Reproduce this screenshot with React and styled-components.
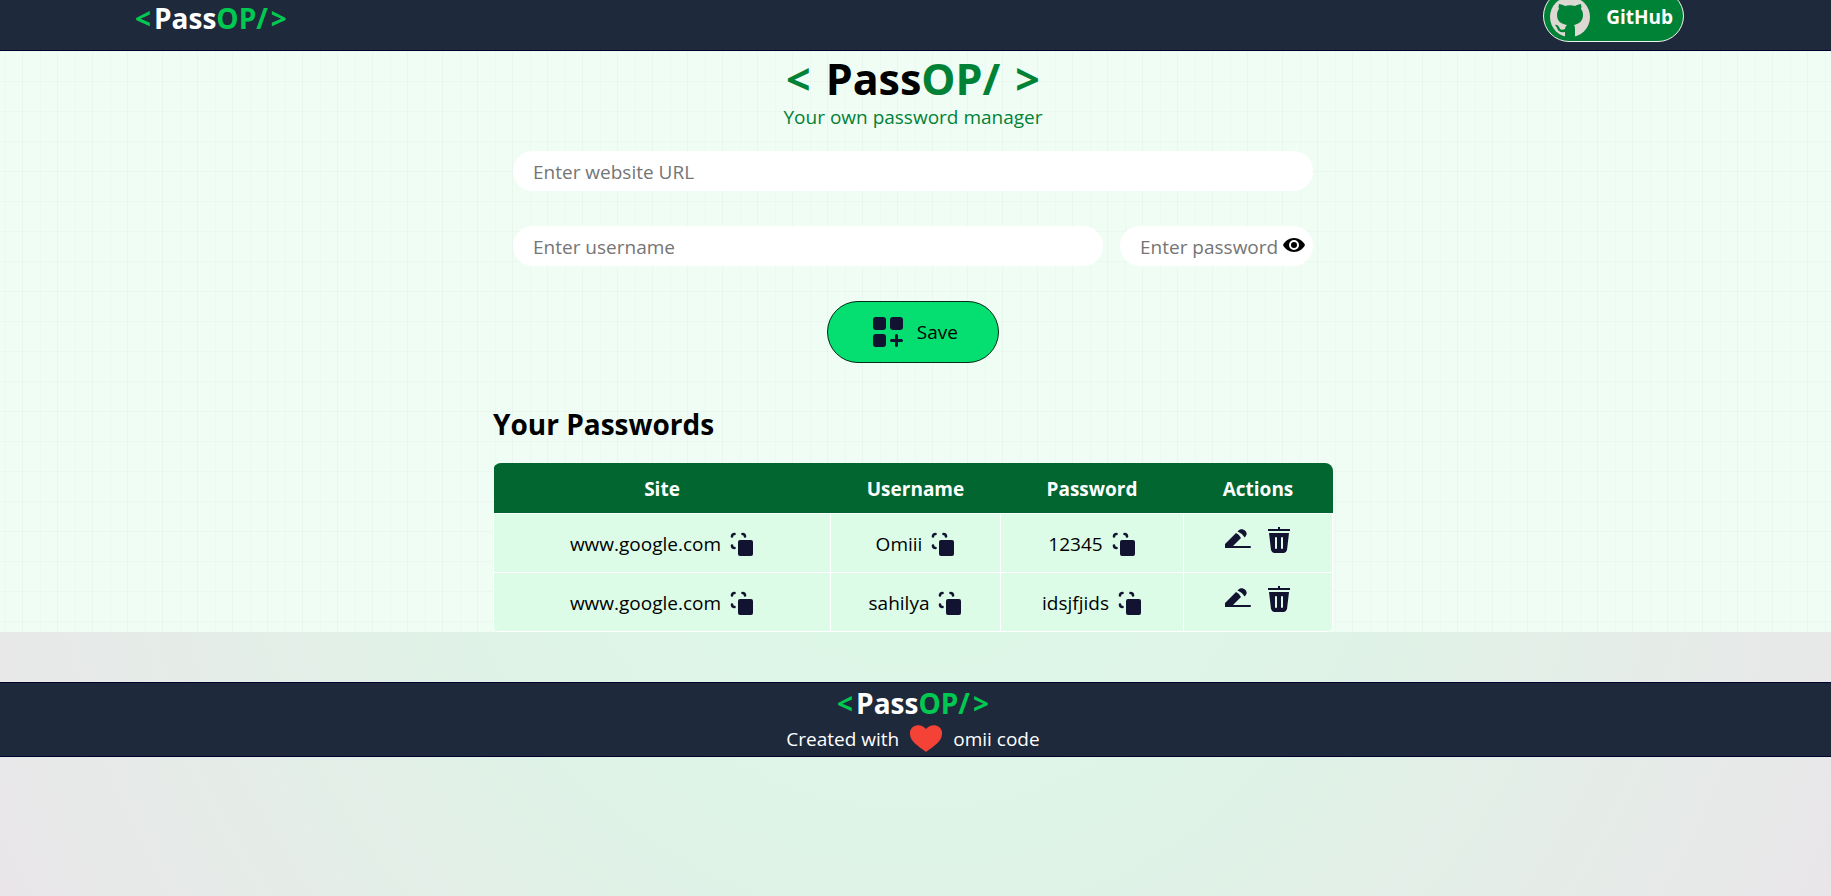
import React from "react";
import styled, { createGlobalStyle } from "styled-components";

const GlobalStyle = createGlobalStyle`
  *, *::before, *::after { box-sizing: border-box; }
  html { background: #e9e6ea; }
  body {
    margin: 0;
    font-family: "Segoe UI", "Open Sans", "Noto Sans", sans-serif;
    font-size: 19px;
    line-height: 30px;
    color: #000;
  }
  h1, h2, p { margin: 0; }
  input, button { font: inherit; }
`;

const Page = styled.div`
  min-height: 100vh;
  background: radial-gradient(circle at 50% 50%, #dcfae4 0%, #ddf6e7 25%, #e0f2e7 50%, #e5ece8 75%, #e8e8e9 92%, #e9e5e9 100%);
`;

const Header = styled.header`
  height: 51px;
  padding: 0 135px;
  display: flex;
  justify-content: space-between;
  background: #1e293b;
  border-bottom: 1px solid #00002e;
  overflow: hidden;
`;

const Brand = styled.div`
  display: flex;
  gap: 3px;
  font-size: 28px;
  font-weight: 700;
  line-height: 36px;
  color: #fff;
`;

const Green = styled.span`
  color: ${(p) => (p.$dark ? "#008236" : "#00c951")};
`;

const GithubButton = styled.button`
  align-self: flex-end;
  flex: none;
  width: 141px;
  height: 52px;
  margin: 0 12px 8px 0;
  padding: 2px 10px 0 6px;
  display: flex;
  align-items: center;
  justify-content: space-between;
  border: 1px solid #f1f1f1;
  border-radius: 26px;
  background: #008236;
  color: #fff;
  font-weight: 700;
`;

const Main = styled.main`
  min-height: 581px;
  padding-right: 5px;
  background-color: #f0fdf4;
  background-image:
    linear-gradient(to right, #8080800f 1px, transparent 1px),
    linear-gradient(to right, #80808008 1px, transparent 1px),
    linear-gradient(to bottom, #8080800c 1px, transparent 1px);
  background-size: 35px 30px;
  background-position: 22px 0, 5px 0, 0 0;
`;

const Container = styled.div`
  max-width: 840px;
  margin: 0 auto;
`;

const Title = styled.h1`
  padding-top: 3px;
  display: flex;
  justify-content: center;
  gap: 15px;
  font-size: 43px;
  line-height: 50px;
`;

const Tagline = styled.p`
  padding-top: 1px;
  line-height: 24px;
  color: #008236;
  text-align: center;
`;

const Form = styled.form`
  padding: 22px 20px 0;
  display: flex;
  flex-direction: column;
  align-items: center;
  gap: 35px;
`;

const FieldRow = styled.div`
  width: 100%;
  display: flex;
  gap: 17px;
`;

const Input = styled.input`
  width: 100%;
  min-width: 0;
  height: 40px;
  padding: 6px 20px 4px;
  border: 0;
  border-radius: 20px;
  background: #fff;
  &::placeholder { color: #757575; opacity: 1; }
`;

const PasswordField = styled.div`
  position: relative;
  flex: none;
  width: 193px;
`;

const EyeButton = styled.button`
  position: absolute;
  top: 8px;
  right: 8px;
  padding: 0;
  border: 0;
  background: none;
  display: flex;
`;

const SaveButton = styled.button`
  width: 172px;
  height: 62px;
  padding: 0 40px 0 45px;
  display: flex;
  align-items: center;
  justify-content: space-between;
  border: 1px solid #022c14;
  border-radius: 31px;
  background: #05df72;
  color: #000;
`;

const ListTitle = styled.h2`
  padding: 42px 0 20px;
  font-size: 28px;
  line-height: 38px;
`;

const Table = styled.table`
  width: 100%;
  table-layout: fixed;
  border-collapse: collapse;
  border-radius: 8px;
  overflow: hidden;
`;

const Col = styled.col`
  width: ${(p) => (p.$w ? `${p.$w}px` : "auto")};
`;

const HeadCell = styled.th`
  height: 50px;
  padding: 2px 0 0;
  background: #016630;
  color: #fff;
  font-weight: 700;
`;

const Cell = styled.td`
  height: 59px;
  padding: 2px 0 0;
  border: 1px solid #fff;
  background: #dcfce7;
`;

const CellContent = styled.div`
  display: flex;
  align-items: center;
  justify-content: center;
  gap: ${(p) => p.$gap}px;
  padding-bottom: ${(p) => p.$lift || 0}px;
`;

const IconButton = styled.button`
  padding: 0;
  border: 0;
  background: none;
  color: #121331;
  display: flex;
`;

const Footer = styled.footer`
  margin-top: 50px;
  height: 75px;
  padding: 2px 5px 0 0;
  display: flex;
  flex-direction: column;
  align-items: center;
  background: #1e293b;
  border: 1px solid #00002e;
  border-width: 1px 0;
  color: #fff;
`;

const Credit = styled.div`
  height: 36px;
  display: flex;
  align-items: center;
  gap: 11px;
`;

const GithubMark = () => (
  <svg width="40" height="40" viewBox="0 0 40 40" aria-hidden="true">
    <circle cx="20" cy="20" r="20" fill="#ddd8d2" />
    <path fill="#008236" d="M15 40v-5c-5 1-7-1-8-4-1-2-2-3-2-3 3-1 4 2 5 4 1 1 3 1 5 0 0-2 1-3 2-4-6-1-10-4-10-10 0-3 1-5 2-6-1-2 0-4 0-5 2 0 4 1 6 2 3-1 7-1 10 0 2-1 4-2 6-2 0 1 1 3 0 5 1 1 2 3 2 6 0 6-4 9-9 10 1 1 1 3 1 5v7z" />
  </svg>
);

const EyeIcon = () => (
  <svg width="22" height="22" viewBox="0 0 22 22" aria-hidden="true">
    <path d="M0 11C2 7 6 4 11 4s9 3 11 7c-2 4-6 7-11 7S2 15 0 11Z" />
    <circle cx="11" cy="11" r="4" fill="none" stroke="#fff" strokeWidth="2" />
  </svg>
);

const AddIcon = () => (
  <svg width="30" height="30" viewBox="0 0 30 30" fill="#121331" aria-hidden="true">
    <rect width="13" height="13" rx="3" />
    <rect x="17" width="13" height="13" rx="3" />
    <rect y="17" width="13" height="13" rx="3" />
    <path d="M23.500 18.500v10M18.500 23.500h10" stroke="#121331" strokeWidth="3" strokeLinecap="round" />
  </svg>
);

const CopyIcon = () => (
  <svg width="24" height="24" viewBox="0 0 24 24" fill="none" stroke="currentColor" strokeWidth="2" strokeLinecap="round" aria-hidden="true">
    <path d="M2 4.500Q2 2 4.500 2M12.500 2Q15 2 15 4.500M2 13.500Q2 16 4.500 16" strokeWidth="2.600" />
    <rect x="9" y="9" width="13" height="14" rx="1" fill="currentColor" />
  </svg>
);

const EditIcon = () => (
  <svg width="26" height="26" viewBox="0 0 26 26" fill="currentColor" aria-hidden="true">
    <path d="M0 21v-4L11 6q3 1 5 5l-8 8h17a1 1 0 0 1 0 2Z" />
    <path d="m12.500 4.500 1-1c4-4 11 2 7 6l-1 1q-2-4-7-6Z" />
  </svg>
);

const TrashIcon = () => (
  <svg width="24" height="26" viewBox="0 0 24 26" fill="currentColor" aria-hidden="true">
    <path d="M11 0h2v2h10v2H1V2h10Z" />
    <path fillRule="evenodd" d="M2 6h20l-2 17q-1 3-3 3H7q-2 0-3-3ZM8 11v10q0 1 1 1t1-1V11q0-1-1-1t-1 1Zm6 0v10q0 1 1 1t1-1V11q0-1-1-1t-1 1Z" />
  </svg>
);

const HeartIcon = () => (
  <svg width="32" height="27" viewBox="0 0 32 27" aria-hidden="true">
    <path fill="#f44336" d="M16 27C8 21 0 16 0 9-1 0 11-3 16 4c5-7 17-4 16 5 0 7-8 12-16 18Z" />
  </svg>
);

const Logo = () => (
  <Brand><Green>&lt;</Green><span>Pass<Green>OP/</Green></span><Green>&gt;</Green></Brand>
);

const CopyCell = ({ text }) => (
  <Cell>
    <CellContent $gap={9}>
      <span>{text}</span>
      <IconButton type="button" aria-label={`Copy ${text}`}><CopyIcon /></IconButton>
    </CellContent>
  </Cell>
);

const passwords = [
  { site: "www.google.com", username: "Omiii", password: "12345" },
  { site: "www.google.com", username: "sahilya", password: "idsjfjids" },
];

export default function App() {
  return (
    <Page>
      <GlobalStyle />
      <Header>
        <Logo />
        <GithubButton type="button"><GithubMark />GitHub</GithubButton>
      </Header>
      <Main>
        <Container>
          <Title><Green $dark>&lt;</Green><span>Pass<Green $dark>OP/</Green></span><Green $dark>&gt;</Green></Title>
          <Tagline>Your own password manager</Tagline>
          <Form>
            <Input aria-label="Website URL" placeholder="Enter website URL" />
            <FieldRow>
              <Input aria-label="Username" placeholder="Enter username" />
              <PasswordField>
                <Input type="password" aria-label="Password" placeholder="Enter password" />
                <EyeButton type="button" aria-label="Show password"><EyeIcon /></EyeButton>
              </PasswordField>
            </FieldRow>
            <SaveButton type="button"><AddIcon />Save</SaveButton>
          </Form>
          <ListTitle>Your Passwords</ListTitle>
          <Table>
            <colgroup><Col $w={337} /><Col $w={170} /><Col $w={183} /><Col /></colgroup>
            <thead>
              <tr>
                <HeadCell>Site</HeadCell>
                <HeadCell>Username</HeadCell>
                <HeadCell>Password</HeadCell>
                <HeadCell>Actions</HeadCell>
              </tr>
            </thead>
            <tbody>
              {passwords.map((row) => (
                <tr key={row.username}>
                  <CopyCell text={row.site} />
                  <CopyCell text={row.username} />
                  <CopyCell text={row.password} />
                  <Cell>
                    <CellContent $gap={16} $lift={7}>
                      <IconButton type="button" aria-label="Edit"><EditIcon /></IconButton>
                      <IconButton type="button" aria-label="Delete"><TrashIcon /></IconButton>
                    </CellContent>
                  </Cell>
                </tr>
              ))}
            </tbody>
          </Table>
        </Container>
      </Main>
      <Footer>
        <Logo />
        <Credit><span>Created with</span><HeartIcon /><span>omii code</span></Credit>
      </Footer>
    </Page>
  );
}
